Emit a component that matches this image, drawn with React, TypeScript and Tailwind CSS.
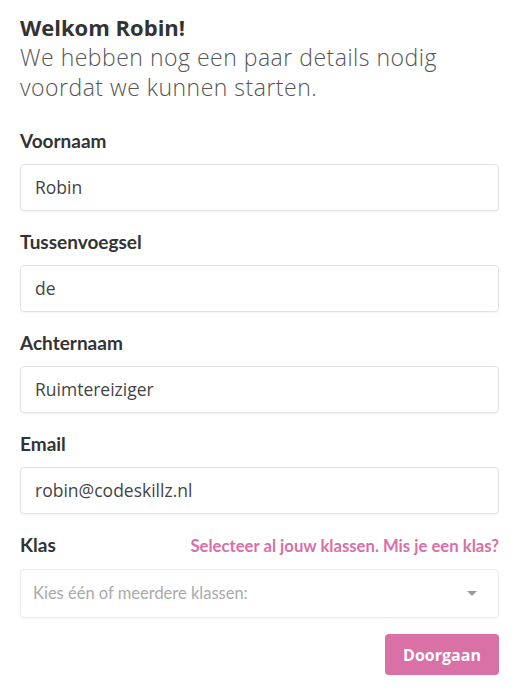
import React from "react";

function Field({ label, value }: { label: string; value: string }) {
  return (
    <div className="flex flex-col">
      <label className="font-['Lato',sans-serif] font-bold text-[19px] leading-[22px] text-[#333] mb-[12px]">{label}</label>
      <div className="h-[47px] rounded-[4px] border border-[#e3e3e3] shadow-[0_1px_2px_rgba(0,0,0,0.05)] bg-white flex items-center px-[14px] font-['Open_Sans',sans-serif] text-[17.5px] text-[#444]">
        {value}
      </div>
    </div>
  );
}

export default function App() {
  return (
    <div className="w-[532px] min-h-[699px] bg-white pl-[20px] pr-[33px] pt-[12px]">
      <h1 className="font-['Open_Sans',sans-serif] font-bold text-[22px] leading-[30px] text-[#333]">Welkom Robin!</h1>
      <p className="max-w-[445px] font-['Open_Sans',sans-serif] font-light text-[23px] tracking-[0.5px] leading-[30px] text-[#555]">
        We hebben nog een paar details nodig voordat we kunnen starten.
      </p>
      <div className="flex flex-col gap-[20px] mt-[28px]">
        <Field label="Voornaam" value="Robin" />
        <Field label="Tussenvoegsel" value="de" />
        <Field label="Achternaam" value="Ruimtereiziger" />
        <Field label="Email" value="robin@codeskillz.nl" />
        <div className="flex flex-col">
          <div className="flex justify-between items-baseline mb-[12px]">
            <span className="font-['Lato',sans-serif] font-bold text-[19px] leading-[22px] text-[#333]">Klas</span>
            <span className="font-['Lato',sans-serif] font-bold text-[16.7px] leading-[22px] text-[#d96fa6]">Selecteer al jouw klassen. Mis je een klas?</span>
          </div>
          <div className="h-[49px] rounded-[4px] border border-[#ececec] shadow-[0_1px_2px_rgba(0,0,0,0.04)] bg-white flex items-center justify-between pl-[12px] pr-[21px] font-['Lato',sans-serif] text-[16.5px] text-[#aaa]">
            <span>Kies één of meerdere klassen:</span>
            <span className="w-0 h-0 border-l-[5px] border-r-[5px] border-t-[5px] border-l-transparent border-r-transparent border-t-[#999]" />
          </div>
        </div>
      </div>
      <div className="flex justify-end mt-[16px]">
        <button className="w-[114px] h-[41px] rounded-[4px] bg-[#d970a6] text-white font-['Open_Sans',sans-serif] font-bold text-[16px]">Doorgaan</button>
      </div>
    </div>
  );
}
